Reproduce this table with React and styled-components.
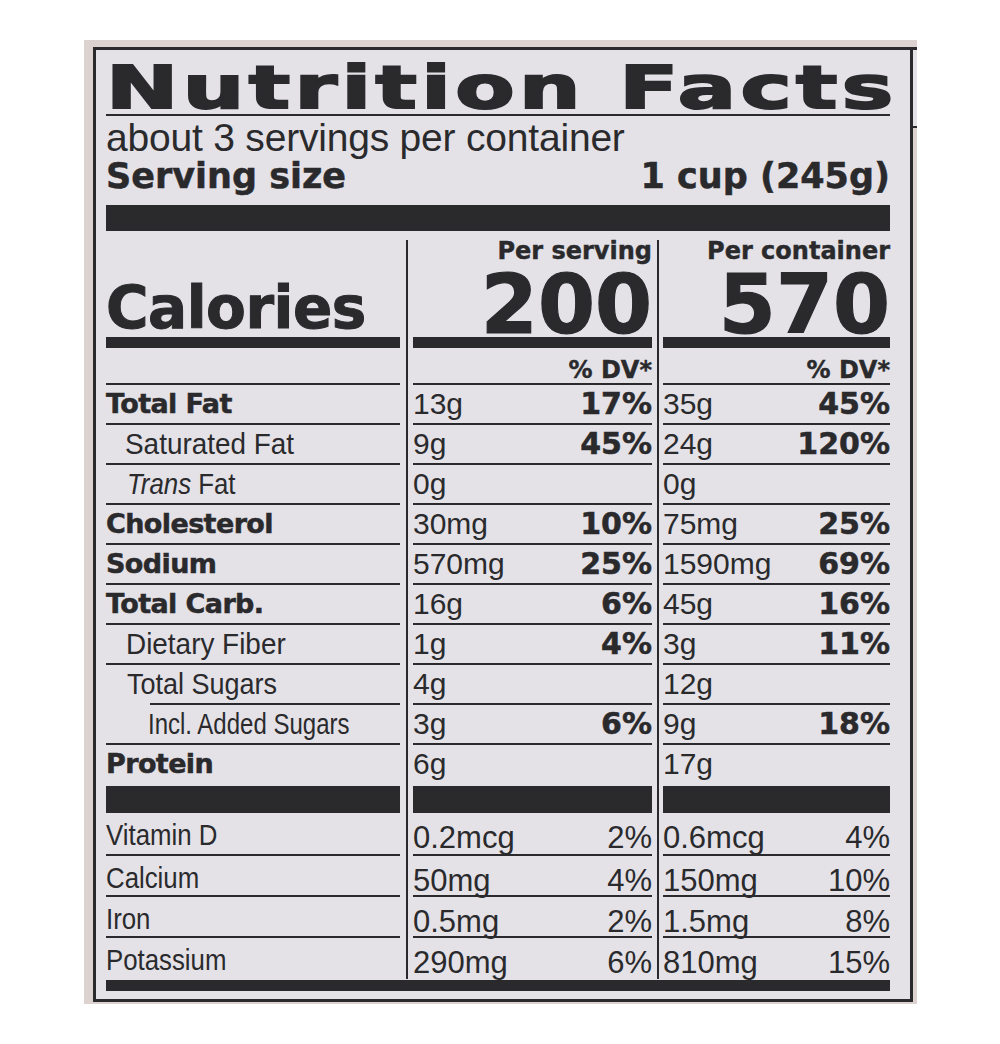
import React from 'react'
import styled, { createGlobalStyle } from 'styled-components'

const ink = '#2a2a2d'
const paper = '#e4e2e7'

const GlobalStyle = createGlobalStyle`
  html, body {
    margin: 0;
    padding: 0;
    background: #ffffff;
  }
  body {
    font-family: "Liberation Sans", Arial, sans-serif;
    color: ${ink};
  }
`

const Page = styled.div`
  width: 1000px;
  height: 1044px;
  box-sizing: border-box;
  padding: 40px 0 0 84px;
`

const Label = styled.div`
  position: relative;
  width: 833px;
  height: 964px;
  box-sizing: border-box;
  padding: 7px 4px 2px 9px;
  background: #dcd2cf;

  /* edge of the next panel peeking out on the right */
  &::after {
    content: '';
    position: absolute;
    top: 7px;
    right: 0;
    width: 4px;
    height: 76px;
    border-top: 3px solid ${ink};
    border-bottom: 2px solid ${ink};
    background: ${paper};
  }
`

const Frame = styled.div`
  height: 100%;
  box-sizing: border-box;
  border: 3px solid ${ink};
  background: ${paper};
  padding: 0 20px 0 10px;
  display: flex;
  flex-direction: column;
`

const Heavy = styled.span`
  font-family: "DejaVu Sans", "Liberation Sans", sans-serif;
  font-weight: 700;
  -webkit-text-stroke: ${p => p.$stroke || 0}px ${ink};
`

const Title = styled.div`
  margin-top: 12px;
  height: 52px;
  border-bottom: 2px solid ${ink};
  white-space: nowrap;

  ${Heavy} {
    display: inline-block;
    font-size: 59px;
    line-height: 52px;
    letter-spacing: 3px;
    transform: scaleX(1.465);
    transform-origin: left center;
  }
`

const Servings = styled.div`
  margin-top: 4px;
  font-size: 39px;
  line-height: 36px;
  letter-spacing: -0.2px;
`

const ServingRow = styled.div`
  margin-top: 3px;
  display: flex;
  justify-content: space-between;
  font-size: 35px;
  line-height: 34px;
`

const Bar = styled.div`
  height: ${p => p.$h}px;
  margin-top: ${p => p.$top || 0}px;
  background: ${ink};
`

const Table = styled.div`
  margin-top: 9px;
  display: flex;
`

const Col = styled.div`
  width: ${p => p.$w}px;
  display: flex;
  flex-direction: column;
`

const Rule = styled.div`
  width: ${p => p.$w}px;
  display: flex;
  justify-content: center;

  &::before {
    content: '';
    width: 2px;
    background: ${ink};
  }
`

const Head = styled.div`
  height: 97px;
  display: flex;
  flex-direction: column;
  justify-content: space-between;
  align-items: ${p => (p.$right ? 'flex-end' : 'flex-start')};
`

const Small = styled(Heavy)`
  font-size: 24px;
  line-height: 22px;
`

const BigNumber = styled(Heavy)`
  font-size: 82px;
  line-height: 64px;
`

const Calories = styled(Heavy)`
  margin-top: auto;
  font-size: 58px;
  line-height: 58px;
  letter-spacing: -0.5px;
`

const DvHead = styled.div`
  height: 37px;
  box-sizing: border-box;
  border-bottom: 2px solid ${ink};
  padding-bottom: 2px;
  display: flex;
  justify-content: flex-end;
  align-items: flex-end;
`

const Cell = styled.div`
  height: ${p => p.$h || 40}px;
  box-sizing: border-box;
  display: flex;
  justify-content: space-between;
  align-items: flex-start;
  padding-left: ${p => p.$indent || 0}px;
  padding-top: ${p => p.$pt || 0}px;
  background: ${p =>
    p.$last ? 'none' : `linear-gradient(${ink}, ${ink}) no-repeat`};
  background-size: calc(100% - ${p => p.$ruleIndent || 0}px) 2px;
  background-position: right bottom;
`

const Name = styled.span`
  display: inline-block;
  font-size: 30px;
  line-height: 38px;
  white-space: nowrap;
  transform: scaleX(${p => p.$sx || 0.88});
  transform-origin: left center;
`

const BoldName = styled(Heavy)`
  font-size: 27px;
  line-height: 38px;
  letter-spacing: -0.6px;
`

const Amount = styled.span`
  font-size: ${p => p.$size || 30}px;
  line-height: 38px;
  white-space: nowrap;
`

const Dv = styled(Heavy)`
  font-size: 30px;
  line-height: 38px;
`

const Trans = styled.i`
  font-style: italic;
`

const nutrients = [
  { name: 'Total Fat', bold: true, ps: ['13g', '17%'], pc: ['35g', '45%'] },
  { name: 'Saturated Fat', indent: 19, sx: 0.93, ps: ['9g', '45%'], pc: ['24g', '120%'] },
  { name: <><Trans>Trans</Trans> Fat</>, indent: 21, sx: 0.86, ps: ['0g'], pc: ['0g'] },
  { name: 'Cholesterol', bold: true, ps: ['30mg', '10%'], pc: ['75mg', '25%'] },
  { name: 'Sodium', bold: true, ps: ['570mg', '25%'], pc: ['1590mg', '69%'] },
  { name: 'Total Carb.', bold: true, ps: ['16g', '6%'], pc: ['45g', '16%'] },
  { name: 'Dietary Fiber', indent: 20, sx: 0.93, ps: ['1g', '4%'], pc: ['3g', '11%'] },
  { name: 'Total Sugars', indent: 21, sx: 0.9, ps: ['4g'], pc: ['12g'], ruleIndent: 44 },
  { name: 'Incl. Added Sugars', indent: 42, sx: 0.8, ps: ['3g', '6%'], pc: ['9g', '18%'] },
  { name: 'Protein', bold: true, ps: ['6g'], pc: ['17g'], last: true, h: 41 },
]

const vitamins = [
  { name: 'Vitamin D', ps: ['0.2mcg', '2%'], pc: ['0.6mcg', '4%'], h: 43 },
  { name: 'Calcium', ps: ['50mg', '4%'], pc: ['150mg', '10%'], h: 41 },
  { name: 'Iron', ps: ['0.5mg', '2%'], pc: ['1.5mg', '8%'], h: 41 },
  { name: 'Potassium', ps: ['290mg', '6%'], pc: ['810mg', '15%'], h: 41, last: true },
]

const NameColumn = () => (
  <Col $w={294}>
    <Head>
      <Calories $stroke={1}>Calories</Calories>
    </Head>
    <Bar $h={11} />
    <DvHead />
    {nutrients.map((n, i) => (
      <Cell
        key={i}
        $indent={n.indent}
        $ruleIndent={n.ruleIndent}
        $last={n.last}
        $h={n.h}
      >
        {n.bold ? (
          <BoldName $stroke={0.5}>{n.name}</BoldName>
        ) : (
          <Name $sx={n.sx}>{n.name}</Name>
        )}
      </Cell>
    ))}
    <Bar $h={27} />
    {vitamins.map((v, i) => (
      <Cell key={i} $h={v.h} $last={v.last} $pt={3}>
        <Name $sx={0.86}>{v.name}</Name>
      </Cell>
    ))}
  </Col>
)

const ValueColumn = ({ w, heading, calories, pick }) => (
  <Col $w={w}>
    <Head $right>
      <Small $stroke={0.4}>{heading}</Small>
      <BigNumber $stroke={1.2}>{calories}</BigNumber>
    </Head>
    <Bar $h={11} />
    <DvHead>
      <Small $stroke={0.4}>% DV*</Small>
    </DvHead>
    {nutrients.map((n, i) => {
      const [amount, dv] = pick(n)
      return (
        <Cell key={i} $last={n.last} $h={n.h}>
          <Amount>{amount}</Amount>
          {dv && <Dv $stroke={0.5}>{dv}</Dv>}
        </Cell>
      )
    })}
    <Bar $h={27} />
    {vitamins.map((v, i) => {
      const [amount, dv] = pick(v)
      return (
        <Cell key={i} $h={v.h} $last={v.last} $pt={6}>
          <Amount $size={31}>{amount}</Amount>
          <Amount $size={31}>{dv}</Amount>
        </Cell>
      )
    })}
  </Col>
)

export default function App() {
  return (
    <>
      <GlobalStyle />
      <Page>
        <Label>
          <Frame>
            <Title>
              <Heavy $stroke={2}>Nutrition Facts</Heavy>
            </Title>
            <Servings>about 3 servings per container</Servings>
            <ServingRow>
              <Heavy $stroke={0.5}>Serving size</Heavy>
              <Heavy $stroke={0.5}>1 cup (245g)</Heavy>
            </ServingRow>
            <Bar $h={26} $top={12} />
            <Table>
              <NameColumn />
              <Rule $w={13} />
              <ValueColumn w={239} heading="Per serving" calories="200" pick={n => n.ps} />
              <Rule $w={11} />
              <ValueColumn w={227} heading="Per container" calories="570" pick={n => n.pc} />
            </Table>
            <Bar $h={11} $top={1} />
          </Frame>
        </Label>
      </Page>
    </>
  )
}
